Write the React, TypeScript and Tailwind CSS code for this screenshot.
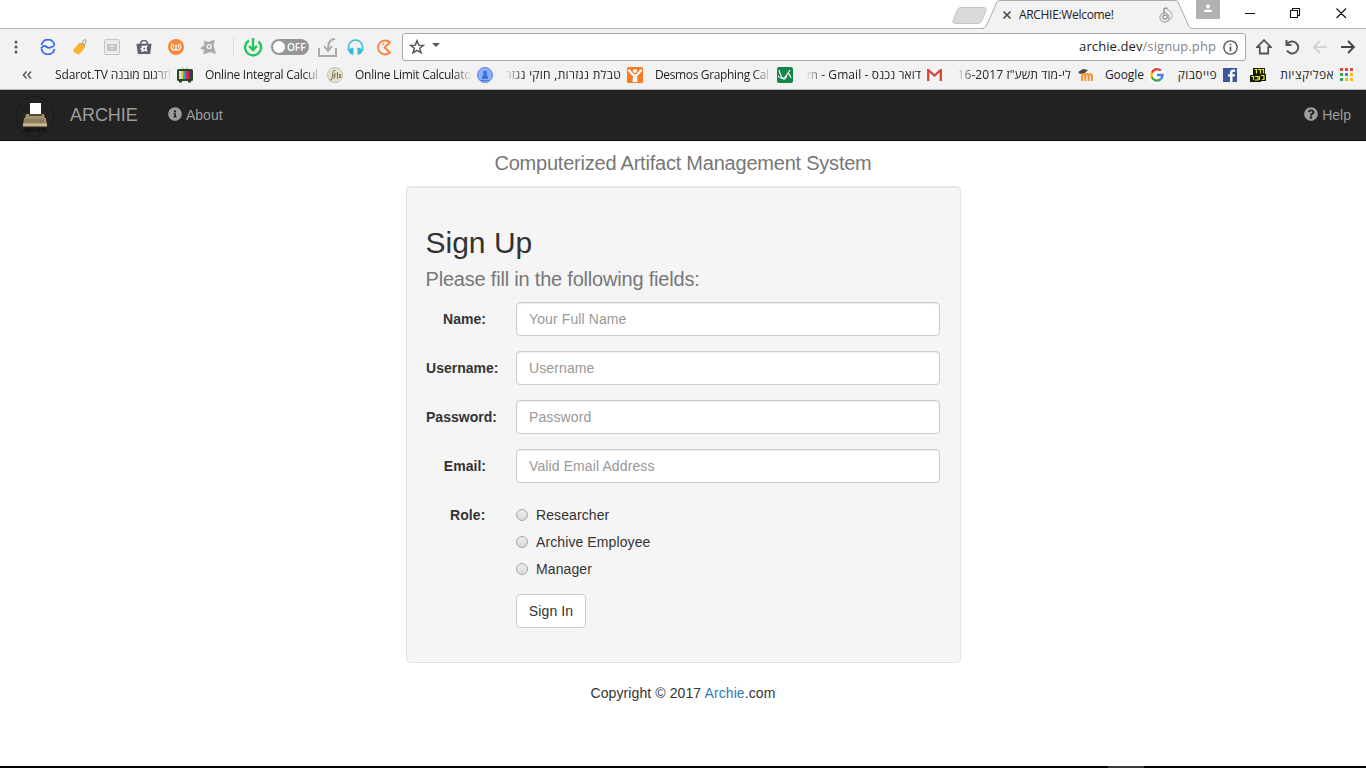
import React from "react";
import { FaInfoCircle, FaQuestionCircle } from "react-icons/fa";

function Slot({ w = "w-8", children }: { w?: string; children: React.ReactNode }) {
  return <span className={`flex h-full shrink-0 items-center justify-center ${w}`}>{children}</span>;
}

function TabStrip() {
  return (
    <div className="relative h-[29px] bg-white">
      <svg className="block" width="1366" height="29" viewBox="0 0 1366 29">
        <path d="M0 28.5H984" stroke="#b4b4b4" />
        <path d="M1192 28.5H1366" stroke="#b4b4b4" />
        <path d="M961 7.5h22q4 0 3 3l-4 10q-1 3-4 3h-22q-4 0-3-3l4-10q1-3 4-3z" fill="#d9d9d9" stroke="#c6c6c6" />
        <path d="M981 29q4 0 5-2L997 2q1-2 4-2h173q3 0 4 2l11 25q1 2 4 2z" fill="#f2f2f2" />
        <path d="M981 28.5q4 0 5-2L997 2q1-1.5 4-1.5h173q3 0 4 1.5l11 24.5q1 2 4 2" fill="none" stroke="#a9a9a9" />
        <path d="M1003.5 11.5l7 7m0-7l-7 7" stroke="#4c4c4c" strokeWidth="1.7" />
        <g fill="none" stroke="#8b8b8b">
          <circle cx="1164.500" cy="17.500" r="4.600" strokeWidth="1" />
          <circle cx="1165" cy="17" r="2.200" strokeWidth="1.200" />
          <path d="M1167 9.500q5 2 5 6-.5 4-4.500 6" stroke="#c4c4c4" strokeWidth="1.400" />
          <path d="M1164 13V9.500q.3-2 3.500-1" strokeWidth="1.400" />
        </g>
        <path d="M1196 0h24v19h-24z" fill="#b1b1b1" />
        <circle cx="1208" cy="6.500" r="2" fill="#fff" />
        <path d="M1204 12v-1q0-1.600 4-1.600t4 1.600v1z" fill="#fff" />
        <path d="M1245 13.500h10M1290.500 10.500h7v7h-7zM1292.500 10V8.500h7v7H1298M1336.500 8.500l9.500 9.500m0-9.500l-9.500 9.500" fill="none" stroke="#111" strokeWidth="1.1" />
      </svg>
      <span className="absolute left-[1019px] top-[6px] whitespace-nowrap text-[12px] leading-[17px] tracking-[-0.32px] text-[#222]">ARCHIE:Welcome!</span>
    </div>
  );
}

function Toolbar() {
  return (
    <div className="flex h-9 items-center">
      <Slot w="w-[31px]">
        <svg width="4" height="14" fill="#5a5a5a"><circle cx="2" cy="2" r="1.500" /><circle cx="2" cy="7" r="1.500" /><circle cx="2" cy="12" r="1.500" /></svg>
      </Slot>
      <span className="w-px" />
      <Slot>
        <svg width="16" height="16" viewBox="0 0 16 16" fill="none" stroke="#3367e8" strokeWidth="1.700">
          <path d="M1.500 6A6.600 6.600 0 0 1 14.500 6M1.500 10a6.600 6.600 0 0 0 13 0M1 9.500q2.500-4 5-2t4.500 1 4-2" />
        </svg>
      </Slot>
      <Slot>
        <svg width="16" height="18" viewBox="0 0 16 18">
          <path d="M1.500 11.500L7.500 4.500l5 1 .5 4-5.500 6.500q-.8 1-2 .2l-4-2.500q-1-.8 0-2.200z" fill="#f9b233" />
          <path d="M10.500 6.500q0-5 2.500-4.800t-1 5.500" fill="none" stroke="#999" />
        </svg>
      </Slot>
      <Slot>
        <svg width="16" height="16" viewBox="0 0 16 16">
          <rect x=".5" y=".5" width="15" height="15" rx="1" fill="#ececec" stroke="#c5c5c5" />
          <path d="M3 5h10v7H3z" fill="#c2c2c2" /><path d="M5 6.500h6v1H5zM7.500 6.500h1V11h-1z" fill="#eee" />
        </svg>
      </Slot>
      <Slot>
        <svg width="16" height="16" viewBox="0 0 17 16">
          <path d="M5 6V3.500Q5.500 1 8.500 1T12 3.500V6" fill="none" stroke="#666674" strokeWidth="1.600" />
          <path d="M.5 4.500h16L15 15.500H2z" fill="#60606d" />
          <path d="M6 6.500l2.500.5 4-1-1.300 3 1 4-3-.7-3.700 1.200.5-2.500-2-1 2-1.300z" fill="#fff" /><circle cx="8.700" cy="9.600" r="1" fill="#60606d" />
        </svg>
      </Slot>
      <Slot>
        <svg width="16" height="16" viewBox="0 0 16 16">
          <circle cx="8" cy="8" r="8" fill="#f5893b" />
          <path d="M4.500 4.500Q2 8 4.500 10.500q2 1.500 3.500-.7V5.500v4.300q1.500 2.200 3.500.7Q14 8 11.500 4.500M5.800 5.500q-.8 2 0 3m4.400-3q.8 2 0 3" fill="none" stroke="#fff" strokeWidth="1.200" />
        </svg>
      </Slot>
      <Slot>
        <svg width="16" height="16" viewBox="0 0 17 16">
          <path d="M4.500 1.500L9 3l6.500-2.500L14 6l2.500 9-5.500-2L4 15.500l.5-4.500L.5 9.500 5 6z" fill="#a8a8b0" strokeLinejoin="round" stroke="#a8a8b0" strokeWidth=".6" />
          <circle cx="9.500" cy="7.500" r="2" fill="none" stroke="#f2f2f2" strokeWidth="1.400" />
          <path d="M11.500 5v5.300" stroke="#f2f2f2" />
        </svg>
      </Slot>
      <span className="ml-[9px] mr-1.5 h-5 w-px bg-[#dcdcdc]" />
      <Slot w="w-[26px]">
        <svg width="20" height="19" viewBox="0 0 20 19" fill="none" stroke="#22c55e" strokeWidth="2.400">
          <path d="M6 2.500A8 8 0 1 0 15.500 3.500" /><path d="M10 0v11M6 8l4 4 4-4" />
        </svg>
      </Slot>
      <span className="ml-[5px] flex h-4 w-[38px] items-center rounded-full bg-[#969696] pl-[2px]">
        <span className="h-3 w-3 rounded-full bg-white" />
        <span className="ml-[2px] text-[10px] font-semibold leading-4 text-white">OFF</span>
      </span>
      <Slot w="w-9">
        <svg width="19" height="19" viewBox="0 0 19 19" fill="none" stroke="#aaa" strokeWidth="2">
          <path d="M1 10v8h17v-8" /><path d="M17 1q-7 0-7 10M6 8l4 5 4-5" />
        </svg>
      </Slot>
      <Slot w="w-5">
        <svg width="17" height="17" viewBox="0 0 17 17">
          <path d="M1.500 12V8a7 7 0 0 1 14 0v4" fill="none" stroke="#38bdd8" strokeWidth="1.600" />
          <path d="M6.500 8.500v7.300q-4 0-5-4Q2.500 9 6.500 8.500zM10.500 8.500v7.300q4 0 5-4Q14.500 9 10.500 8.500z" fill="#38bdd8" />
        </svg>
      </Slot>
      <Slot w="w-[37px]">
        <svg width="17" height="17" viewBox="0 0 17 17" fill="none" stroke="#fa8246" strokeWidth="1.800">
          <path d="M15 3.500A7 7 0 1 0 15 13.500L9.500 8.500z" strokeLinejoin="round" /><circle cx="8.500" cy="5" r=".6" fill="#fa8246" strokeWidth="1" />
        </svg>
      </Slot>
      <div className="flex h-7 w-[844px] items-center rounded-[3px] border border-[#a9a9a9] bg-white pl-1.5 pr-[7px]">
        <svg width="16" height="16" viewBox="0 0 16 16" fill="none" stroke="#505050" strokeWidth="1.400"><path d="M8 1.700l1.700 4.400 4.700.2-3.700 3 1.300 4.500-4-2.500-4 2.500 1.300-4.500-3.700-3 4.700-.2z" /></svg>
        <svg className="mb-1 ml-[7px]" width="8" height="5"><path d="M0 0h8L4 4z" fill="#5a5a5a" /></svg>
        <span className="ml-auto text-[13px] tracking-[0.09px] text-[#222]">archie.dev<span className="text-[#858585]">/signup.php</span></span>
        <svg className="ml-[7px]" width="15" height="15" viewBox="0 0 14 14" fill="none" stroke="#555" strokeWidth="1.300"><circle cx="7" cy="7" r="6.200" /><path d="M7 6v4.500M7 3.500V5" strokeWidth="1.600" /></svg>
      </div>
      <span className="w-1" />
      <Slot w="w-7"><svg width="16" height="16" viewBox="0 0 16 16" fill="none" stroke="#555" strokeWidth="1.800"><path d="M1 8.200L8 1.200l7 7h-2.800V14.500H3.800V8.200z" /></svg></Slot>
      <Slot w="w-7"><svg width="16" height="16" viewBox="0 0 16 16" fill="none" stroke="#555" strokeWidth="2"><path d="M2.500 1v5h5M3 5.500A6 6 0 1 1 3 11.500" /></svg></Slot>
      <Slot w="w-7"><svg width="14" height="14" viewBox="0 0 14 14" fill="none" stroke="#ccc" strokeWidth="1.700"><path d="M14 7H1M7 1L1 7l6 6" /></svg></Slot>
      <Slot w="w-7"><svg width="14" height="14" viewBox="0 0 14 14" fill="none" stroke="#444" strokeWidth="1.900"><path d="M0 7h13M7 1l6 6-6 6" /></svg></Slot>
    </div>
  );
}

const label = "block h-[18px] shrink-0 overflow-hidden whitespace-nowrap text-[12px] leading-[18px] text-[#1f1f1f]";
const fadeR = "[mask-image:linear-gradient(to_right,black_84%,transparent)]";
const fadeL = "[mask-image:linear-gradient(to_left,black_84%,transparent)]";

function Bookmarks() {
  return (
    <div className="flex h-6 items-center pb-1">
      <svg className="ml-[22px]" width="10" height="8" fill="none" stroke="#555" strokeWidth="1.500"><path d="M4.500.5L1.500 4l3 3.500M9 .5L6 4l3 3.500" /></svg>
      <span className={`${label} ${fadeR} ml-[23px] w-[117px] tracking-[-0.12px]`}>Sdarot.TV תרגום מובנה</span>
      <svg className="ml-[5px] shrink-0" width="16" height="16" viewBox="0 0 16 16">
        <path d="M5 0l2 3 2-1 2-2" fill="none" stroke="#aaa" /><rect y="2" width="16" height="12" rx="1.500" fill="#284a1b" /><path d="M2 4h2v8H2z" fill="#ddd" /><path d="M4 4h2v8H4z" fill="#e6d820" /><path d="M6 4h2v8H6z" fill="#26b7cf" /><path d="M8 4h2v8H8z" fill="#d42ba2" /><path d="M10 4h2v8h-2z" fill="#e22" /><path d="M12 4h1.500v8H12z" fill="#24c" /><path d="M2 14h3v1.500H2zM11 14h3v1.500h-3z" fill="#333" />
      </svg>
      <span className={`${label} ${fadeR} ml-3 w-[117px] tracking-[-0.3px]`}>Online Integral Calcul</span>
      <svg className="ml-[5px] shrink-0" width="16" height="16" viewBox="0 0 16 16"><circle cx="8" cy="8" r="7.500" fill="#e9e2d1" stroke="#c8c0ac" /><path d="M2.500 13q2 1 2.500-2L6 5q.5-2.500 2.500-1.500M7 12V7h2.500M7 9h2M10.500 5v7M12 7l2 4m0-4l-2 4" stroke="#80786a" fill="none" /></svg>
      <span className={`${label} ${fadeR} ml-3 w-[117px] tracking-[-0.28px]`}>Online Limit Calculato</span>
      <svg className="ml-[5px] shrink-0" width="16" height="16" viewBox="0 0 16 16"><circle cx="8" cy="8" r="7.500" fill="#8eb0fa" stroke="#5686ec" /><circle cx="8" cy="5.500" r="2" fill="#3a70e2" /><path d="M6.500 7h3l1.500 3v2H5v-2z" fill="#3a70e2" /><path d="M4 13h8v1H4z" fill="#4f7ce0" /></svg>
      <span dir="rtl" className={`${label} ${fadeL} ml-3 w-[116px] tracking-[0.28px]`}>טבלת נגזרות, חוקי נגזר</span>
      <svg className="ml-1.5 shrink-0" width="16" height="16" viewBox="0 0 16 16"><rect width="16" height="16" rx="1.500" fill="#f97a20" /><path d="M.5 3.500L6 9.500 5.500 15h5L10 9.500l5.500-6-2-1.500-4 5h-3L2.500 2z" fill="#fff" /><circle cx="8" cy="4" r="2" fill="#fff" /></svg>
      <span className={`${label} ${fadeR} ml-3 w-[117px] tracking-[-0.36px]`}>Desmos Graphing Cal</span>
      <svg className="ml-[5px] shrink-0" width="16" height="16" viewBox="0 0 16 16"><rect width="16" height="16" rx="2" fill="#16854a" /><path d="M2 3q2 8 4.500 9T10 7q2-2 4 4M1 9q4 5 8 0l4-6" fill="none" stroke="#fff" strokeWidth="1.100" /></svg>
      <span className={`${label} ${fadeL} ml-[13px] flex w-[115px] justify-end tracking-[0.08px]`}><span dir="ltr">m - Gmail - דואר נכנס</span></span>
      <svg className="ml-1.5 shrink-0" width="15" height="12" viewBox="0 0 15 12"><rect width="15" height="12" rx="1" fill="#f5f5f5" /><path d="M1.200 12V1l6.300 5.500L13.800 1v11" fill="none" stroke="#db4437" strokeWidth="2.300" /></svg>
      <span dir="rtl" className={`${label} ${fadeL} ml-3.5 w-[115px] tracking-[0.1px]`}>לי-מוד תשע"ז 16-2017</span>
      <svg className="ml-[7px] shrink-0" width="15" height="14" viewBox="0 0 15 14"><path d="M4 13V7.500q2-3 3.300 0V13V7.500q2-3 3.300 0V13V7.500q2-3 3.300 0V13" fill="none" stroke="#f7932a" strokeWidth="2" /><path d="M0 4l5-3 5 1-3 3-5 1z" fill="#53483f" /></svg>
      <span className={`${label} ml-3 w-[41px] tracking-[-0.1px]`}>Google</span>
      <svg className="ml-0.5 shrink-0" width="18" height="18" viewBox="0 0 16 16"><circle cx="8" cy="8" r="8" fill="#fff" /><g fill="none" strokeWidth="2.200"><path d="M11.500 4.200A5 5 0 0 0 3.400 6" stroke="#ea4335" /><path d="M3.400 6a5 5 0 0 0 0 4" stroke="#fbbc05" /><path d="M3.400 10a5 5 0 0 0 7.800 1.800" stroke="#34a853" /><path d="M11.200 11.800A5 5 0 0 0 13 8H8" stroke="#4285f4" /></g></svg>
      <span dir="rtl" className={`${label} ml-[9px] w-[42px] tracking-[0.4px]`}>פייסבוק</span>
      <svg className="ml-1.5 shrink-0" width="14" height="14" viewBox="0 0 14 14"><path d="M0 0h14v14H0z" fill="#3b5998" /><path d="M9.500 14V8.500h2.300l.3-2.200H9.500V4.800q0-1 1.200-1h1.500V1.700q-5.200-.8-5.200 2.600v2H5v2.200h2V14z" fill="#fff" /></svg>
      <svg className="ml-[13px] shrink-0" width="16" height="14" viewBox="0 0 16 14"><path d="M3 0h12v6h1v7h-5v1H0V7h3z" fill="#161900" /><path d="M4.500 1.500h2v4m1.500-4h2.500v4m1-4h2v4M1.500 8.500h2V12m1.500-3.500h3V12H5m4.500-4V12m1.500-4.500h3v4h-2" fill="none" stroke="#e4e92c" strokeWidth="1.200" /></svg>
      <span dir="rtl" className={`${label} ml-[11px] w-[57px] tracking-[0.4px]`}>אפליקציות</span>
      <svg className="ml-1.5 shrink-0" width="14" height="14"><g fill="#e94435"><path d="M0 0h3v3H0zM5 0h3v3H5zM10 0h3v3h-3z" /></g><path d="M0 5h3v3H0z" fill="#34a853" /><path d="M5 5h3v3H5z" fill="#4285f4" /><path d="M10 5h3v3h-3zM5 10h3v3H5zM10 10h3v3h-3z" fill="#fbbc05" /><path d="M0 10h3v3H0z" fill="#34a853" /></svg>
    </div>
  );
}

function Navbar() {
  return (
    <nav className="flex h-[51px] items-center border-b border-[#080808] bg-[#222] text-[14px] tracking-normal text-[#9d9d9d]">
      <svg className="ml-[15px] mt-1" width="40" height="42" viewBox="0 0 40 42">
        <ellipse cx="20" cy="20.500" rx="19" ry="20" fill="none" stroke="#181818" />
        <path d="M10 16h20v5H10z" fill="#26221a" />
        <path d="M15 7h11v11H15z" fill="#fff" />
        <path d="M11 18h18l1 5H10z" fill="#a4946e" /><path d="M14 18h13v2H14z" fill="#534937" />
        <path d="M9 22h22l1 8H8z" fill="#9f906c" /><path d="M10 24h20M10 26h20" stroke="#645b47" strokeDasharray="1.500 1" />
        <path d="M8 27.500h24v3H8z" fill="#cbb98e" /><path d="M7 12l5 2" stroke="#111" />
        <text x="20" y="36" textAnchor="middle" fontFamily="Liberation Serif, serif" fontSize="6" fontWeight="bold" fill="#0b0b0b">ARCHIE</text>
      </svg>
      <a className="ml-[15px] w-[68px] whitespace-nowrap text-[18px] tracking-[-0.05px]">ARCHIE</a>
      <a className="ml-[30px] flex items-center"><FaInfoCircle className="mb-0.5 mr-1 h-3.5 w-3.5" />About</a>
      <a className="ml-auto mr-[15px] flex items-center"><FaQuestionCircle className="mb-0.5 mr-1 h-3.5 w-3.5" />Help</a>
    </nav>
  );
}

const fields = [
  { name: "Name:", hint: "Your Full Name", type: "text" },
  { name: "Username:", hint: "Username", type: "text" },
  { name: "Password:", hint: "Password", type: "password" },
  { name: "Email:", hint: "Valid Email Address", type: "email" },
];

function SignUp() {
  return (
    <section className="mx-auto h-[477px] w-[555px] rounded-[4px] border border-[#e3e3e3] bg-[#f5f5f5] px-[19px] pt-[39px] shadow-[inset_0_1px_1px_rgba(0,0,0,0.05)]">
      <h1 className="h-[33px] text-[30px] leading-[33px] tracking-normal">Sign Up</h1>
      <h2 className="mt-[9px] h-[22px] text-[20px] leading-[22px] tracking-[-0.2px] text-[#777]">Please fill in the following fields:</h2>
      <form className="mt-3">
        {fields.map((f) => (
          <div key={f.name} className="mb-[15px] flex h-[34px] items-center">
            <label className="flex w-[90px] pl-[0.5px] pr-[29.5px] font-bold tracking-[0.02px]"><span className="ml-auto shrink-0 whitespace-nowrap data-[long=true]:ml-0" data-long={f.name.length > 6}>{f.name}</span></label>
            <input type={f.type} placeholder={f.hint} className="h-[34px] w-[424px] rounded-[4px] border border-[#ccc] bg-white pl-[12.5px] pr-3 text-[14px] tracking-[0.11px] shadow-[inset_0_1px_1px_rgba(0,0,0,0.075)] placeholder:text-[#999]" />
          </div>
        ))}
        <div className="flex">
          <span className="w-[90px] pr-[30px] pt-[7px] text-right font-bold">Role:</span>
          <div className="flex flex-col">
            {["Researcher", "Archive Employee", "Manager"].map((r) => (
              <label key={r} className="flex h-[27px] items-center pt-[7px]">
                <input type="radio" name="role" className="mr-2 h-3 w-3 appearance-none rounded-full border border-[#a8a8a8] bg-linear-to-b from-[#ededed] to-[#d9d9d9]" />
                <span className="pl-[0.5px]">{r}</span>
              </label>
            ))}
            <button type="button" className="mt-[15px] h-[34px] w-[70px] rounded-[4px] border border-[#ccc] bg-white pl-px">Sign In</button>
          </div>
        </div>
      </form>
    </section>
  );
}

export default function App() {
  return (
    <div className="flex h-[768px] w-[1366px] flex-col overflow-hidden bg-white">
      <header className="h-[90px] shrink-0 border-b border-[#b6b6b6] bg-[#f2f2f2] font-['Open_Sans','Noto_Sans','DejaVu_Sans',sans-serif]">
        <TabStrip />
        <Toolbar />
        <Bookmarks />
      </header>
      <div className="flex flex-1 flex-col font-['Liberation_Sans',Arial,sans-serif] text-[14px] leading-5 tracking-[0.1px] text-[#333]">
        <Navbar />
        <h2 className="mb-[12px] mt-[11px] h-[22px] text-center text-[20px] leading-[22px] tracking-[-0.22px] text-[#777]">Computerized Artifact Management System</h2>
        <SignUp />
        <p className="mt-5 text-center">Copyright © 2017 <a className="text-[#337ab7]">Archie</a>.com</p>
      </div>
      <footer className="h-[2px] shrink-0 bg-black pl-[1108px]"><span className="block h-full w-9 bg-[#3a3a3a]" /></footer>
    </div>
  );
}
